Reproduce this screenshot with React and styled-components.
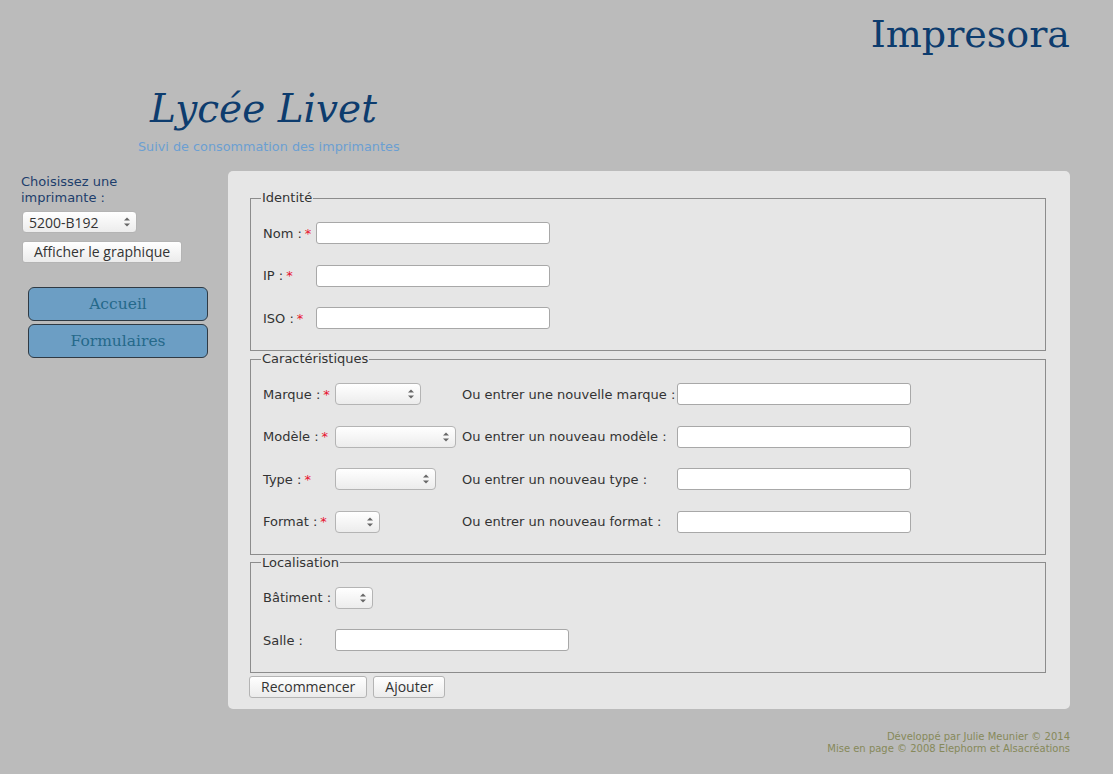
import React from 'react';
import styled, { createGlobalStyle } from 'styled-components';

const GlobalStyle = createGlobalStyle`
  html, body {
    margin: 0;
    padding: 0;
    background: #bbbbbb;
    font-family: "DejaVu Sans", sans-serif;
  }
`;

const Page = styled.div`
  width: 1113px;
  min-height: 774px;
  box-sizing: border-box;
  padding: 0 43px 0 21px;
`;

const Header = styled.header`
  height: 171px;
  display: flex;
  flex-direction: column;
`;

const SiteName = styled.h1`
  margin: 0;
  padding-top: 10px;
  text-align: right;
  font-family: "DejaVu Serif", serif;
  font-weight: normal;
  font-size: 38px;
  line-height: 48px;
  color: #0d3c6e;
`;

const Brand = styled.div`
  margin-left: 117px;
  margin-top: 29px;
  width: 270px;
`;

const BrandTitle = styled.div`
  padding-left: 12px;
  font-family: "DejaVu Serif", serif;
  font-style: italic;
  font-size: 39px;
  line-height: 44px;
  color: #0d3c6e;
`;

const BrandSub = styled.div`
  font-size: 12.8px;
  line-height: 16px;
  color: #6b9fd2;
  margin-top: 8px;
`;

const Body = styled.div`
  display: flex;
  align-items: flex-start;
`;

const Sidebar = styled.aside`
  width: 207px;
  flex-shrink: 0;
  padding-top: 3px;
`;

const PickLabel = styled.div`
  width: 120px;
  font-size: 13px;
  line-height: 16px;
  color: #1d3e6c;
`;

const SelectWrap = styled.div`
  position: relative;
  display: inline-block;
  width: ${(p) => p.$w}px;
  height: 22px;
  vertical-align: middle;
`;

const Select = styled.select`
  appearance: none;
  width: 100%;
  height: 100%;
  box-sizing: border-box;
  margin: 0;
  padding: 0 18px 0 6px;
  border: 1px solid #b4b4b4;
  border-radius: 4px;
  background: linear-gradient(#ffffff, #ececec);
  font-family: "Open Sans", "DejaVu Sans", sans-serif;
  font-size: 14px;
  color: #333;
  outline: none;
`;

const Spinner = styled.svg`
  position: absolute;
  right: 7px;
  top: 6px;
  pointer-events: none;
`;

const Button = styled.button`
  height: 22px;
  margin: 0;
  padding: 0 11px;
  border: 1px solid #b4b4b4;
  border-radius: 3px;
  background: linear-gradient(#ffffff, #ebebeb);
  font-family: "Open Sans", "DejaVu Sans", sans-serif;
  font-size: 14px;
  color: #333;
  line-height: 20px;
`;

const PickRow = styled.div`
  margin-top: ${(p) => p.$top}px;
  margin-left: 1px;
`;

const Nav = styled.nav`
  margin-top: 24px;
  margin-left: 7px;
  display: flex;
  flex-direction: column;
  gap: 3px;
`;

const NavLink = styled.a`
  display: block;
  width: 180px;
  height: 34px;
  box-sizing: border-box;
  border: 1px solid #2f3a44;
  border-radius: 6px;
  background: #6c9ec4;
  text-align: center;
  line-height: 32px;
  font-family: "DejaVu Serif", serif;
  font-size: 15.5px;
  color: #25698a;
  text-decoration: none;
`;

const Panel = styled.main`
  flex: 1;
  background: #e6e6e6;
  border-radius: 5px;
  padding: 19px 24px 11px 21px;
`;

const Fieldset = styled.fieldset`
  margin: 0 0 0 1px;
  padding: 16px 11px 21px 12px;
  border: 1px solid #8c8c8c;
`;

const Legend = styled.legend`
  padding: 0 1px;
  margin-left: -2px;
  font-size: 13px;
  line-height: 16px;
  color: #333;
`;

const Grid = styled.div`
  display: grid;
  grid-template-columns: ${(p) => p.$cols};
  column-gap: 6px;
  row-gap: 20.5px;
  align-items: center;
  justify-items: start;
`;

const Label = styled.span`
  font-size: 13px;
  color: #333;
  white-space: nowrap;
`;

const Req = styled.span`
  color: #e8112d;
  margin-left: 3px;
`;

const Input = styled.input`
  width: ${(p) => p.$w || 234}px;
  height: 22px;
  box-sizing: border-box;
  margin: 0;
  border: 1px solid #a8a8a8;
  border-radius: 3px;
  background: #fff;
`;

const Actions = styled.div`
  display: flex;
  gap: 6px;
  margin-top: 3px;
`;

const Footer = styled.footer`
  margin-top: 22px;
  text-align: right;
  font-size: 10px;
  line-height: 12px;
  color: #86895a;
`;

const Drop = ({ w, value }) => (
  <SelectWrap $w={w}>
    <Select defaultValue={value || ''}>
      <option>{value || ''}</option>
    </Select>
    <Spinner width="6" height="10" viewBox="0 0 6 10">
      <path d="M0 3.5 L3 0.5 L6 3.5 Z" fill="#666" />
      <path d="M0 6.5 L3 9.5 L6 6.5 Z" fill="#666" />
    </Spinner>
  </SelectWrap>
);

const Field = ({ children, req }) => (
  <Label>
    {children}
    {req && <Req>*</Req>}
  </Label>
);

export default function App() {
  return (
    <>
      <GlobalStyle />
      <Page>
        <Header>
          <SiteName>Impresora</SiteName>
          <Brand>
            <BrandTitle>Lycée Livet</BrandTitle>
            <BrandSub>Suivi de consommation des imprimantes</BrandSub>
          </Brand>
        </Header>
        <Body>
          <Sidebar>
            <PickLabel>Choisissez une imprimante :</PickLabel>
            <PickRow $top={5}>
              <Drop w={115} value="5200-B192" />
            </PickRow>
            <PickRow $top={8}>
              <Button>Afficher le graphique</Button>
            </PickRow>
            <Nav>
              <NavLink href="#">Accueil</NavLink>
              <NavLink href="#">Formulaires</NavLink>
            </Nav>
          </Sidebar>
          <Panel>
            <Fieldset>
              <Legend>Identité</Legend>
              <Grid $cols="47px 234px">
                <Field req>Nom :</Field>
                <Input />
                <Field req>IP :</Field>
                <Input />
                <Field req>ISO :</Field>
                <Input />
              </Grid>
            </Fieldset>
            <Fieldset>
              <Legend>Caractéristiques</Legend>
              <Grid $cols="66px 121px 209px 234px">
                <Field req>Marque :</Field>
                <Drop w={86} />
                <Label>Ou entrer une nouvelle marque :</Label>
                <Input />
                <Field req>Modèle :</Field>
                <Drop w={121} />
                <Label>Ou entrer un nouveau modèle :</Label>
                <Input />
                <Field req>Type :</Field>
                <Drop w={101} />
                <Label>Ou entrer un nouveau type :</Label>
                <Input />
                <Field req>Format :</Field>
                <Drop w={45} />
                <Label>Ou entrer un nouveau format :</Label>
                <Input />
              </Grid>
            </Fieldset>
            <Fieldset>
              <Legend>Localisation</Legend>
              <Grid $cols="66px 234px">
                <Label>Bâtiment :</Label>
                <Drop w={38} />
                <Label>Salle :</Label>
                <Input />
              </Grid>
            </Fieldset>
            <Actions>
              <Button>Recommencer</Button>
              <Button>Ajouter</Button>
            </Actions>
          </Panel>
        </Body>
        <Footer>
          Développé par Julie Meunier © 2014
          <br />
          Mise en page © 2008 Elephorm et Alsacréations
        </Footer>
      </Page>
    </>
  );
}
